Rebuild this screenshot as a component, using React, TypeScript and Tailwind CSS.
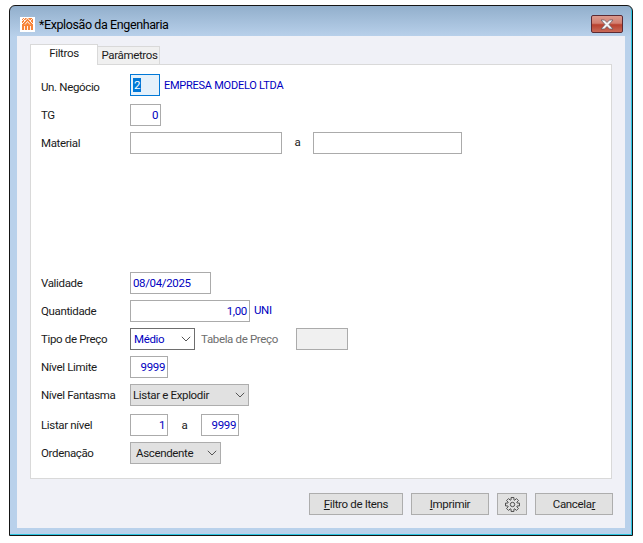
import React from "react";

const FONT = "font-['Roboto','Noto_Sans',sans-serif]";

type RowProps = {
  label: string;
  className?: string;
  labelClass?: string;
  children: React.ReactNode;
};

function Row({ label, className = "", labelClass = "pt-[2px]", children }: RowProps) {
  return (
    <div className={`flex items-center h-[22px] ${className}`}>
      <span className={`w-[89px] text-[#1a1a1a] ${labelClass}`}>{label}</span>
      {children}
    </div>
  );
}

type BoxProps = {
  width: string;
  value?: string;
  align?: string;
};

function Box({ width, value, align = "justify-end" }: BoxProps) {
  return (
    <div
      className={`flex items-center h-[22px] px-[2px] pt-[2px] border border-[#ababab] bg-white text-[#0000c0] ${width} ${align}`}
    >
      {value}
    </div>
  );
}

type ComboProps = {
  width: string;
  value: string;
  padding: string;
  dark?: boolean;
};

function Combo({ width, value, padding, dark }: ComboProps) {
  return (
    <div
      className={`flex items-center justify-between h-[22px] pr-[3px] border ${width} ${padding} ${
        dark
          ? "border-[#6e6e6e] bg-white text-[#0000c0]"
          : "border-[#adadad] bg-[#e1e1e1] text-[#1a1a1a]"
      }`}
    >
      <span className="pt-[2px]">{value}</span>
      <svg width="10" height="6" viewBox="0 0 10 6" fill="none" stroke="#555" strokeWidth="1">
        <path d="M.8.8 5 5l4.2-4.2" />
      </svg>
    </div>
  );
}

type ButtonProps = {
  width: string;
  children: React.ReactNode;
};

function Button({ width, children }: ButtonProps) {
  return (
    <div
      className={`flex items-center justify-center h-[22px] pt-[1px] border border-[#adadad] bg-[#e1e1e1] text-[#1a1a1a] ${width}`}
    >
      {children}
    </div>
  );
}

function AppIcon() {
  return (
    <div className="flex items-center justify-center w-[15px] h-[15px] bg-white">
      <svg width="11" height="12" viewBox="0 0 11 12">
        <rect width="11" height="12" fill="#f7843a" />
        <path
          d="M0 3 3 0M0 0l3 3 2.500-3M5.500 0 8 3l3-3M8 3l3 3M3 3 0 6M5.500 3.500 3 6.500M5.500 3.500 8 6.500M2.500 8v4M5.500 8v4M8.500 8v4"
          fill="none"
          stroke="#fff"
          strokeWidth="0.9"
        />
      </svg>
    </div>
  );
}

function CloseButton() {
  return (
    <div className="flex items-center justify-center w-[32px] h-[18px] rounded-[2px] border border-[#5b2a33] bg-[linear-gradient(#dc9a8e_0%,#d27f70_45%,#b8412f_55%,#c96a58_100%)]">
      <svg width="14" height="11" viewBox="0 0 14 11">
        <path
          d="M1 1h3.500L7 3.500 9.500 1H13L9 5.500l4 4.500H9.500L7 7.500 4.500 10H1l4-4.500z"
          fill="#f4f4f6"
          stroke="#5a5560"
          strokeWidth="0.7"
        />
      </svg>
    </div>
  );
}

// eight-tooth cog outline
const gearPath = Array.from({ length: 8 }, (_, i) => {
  const a = (i * Math.PI) / 4;
  const pts = [
    [a - 0.3, 7.8],
    [a - 0.2, 11.4],
    [a + 0.2, 11.4],
    [a + 0.3, 7.8],
  ];
  return pts
    .map(([t, r]) => `${(12 + r * Math.cos(t)).toFixed(2)} ${(12 + r * Math.sin(t)).toFixed(2)}`)
    .join(" L");
}).join(" L");

function GearIcon() {
  return (
    <svg width="15" height="15" viewBox="0 0 24 24" fill="none" stroke="#3a3a3a" strokeWidth="1.400" strokeLinejoin="round">
      <path d={`M${gearPath} Z`} />
      <circle cx="12" cy="12" r="3.500" />
    </svg>
  );
}

export default function App() {
  return (
    <div className={`w-[643px] h-[543px] bg-white pt-[5px] pl-[9px] text-[11.5px] tracking-[-0.35px] leading-none ${FONT}`}>
      <div className="flex flex-col w-[624px] h-[531px] rounded-t-[6px] border border-[#151515] shadow-[inset_-1px_-1px_0_#2bc4e0] bg-[linear-gradient(#92afcc_0px,#b9d1eb_31px,#b9d1eb_100%)]">
        {/* Title bar */}
        <div className="flex items-center h-[30px] shrink-0 pt-[6px] pl-[10px] pr-[9px]">
          <AppIcon />
          <span className="ml-[4px] pt-[2px] text-[12.5px] tracking-[-0.4px] text-black">*Explosão da Engenharia</span>
          <div className="ml-auto">
            <CloseButton />
          </div>
        </div>

        {/* Client area */}
        <div className="flex flex-col h-[492px] mx-[7px] bg-[#f0f1f7] px-[13px] pt-[8px]">
          {/* Tabs */}
          <div className="flex items-end h-[20px]">
            <div className="flex items-center justify-center w-[68px] h-[21px] pb-[2px] -mb-px z-10 bg-white border border-b-0 border-[#d9d9d9] text-[#1a1a1a]">
              Filtros
            </div>
            <div className="flex items-center justify-center w-[62px] h-[18px] pl-[2px] bg-[#f0f0f0] border border-l-0 border-b-0 border-[#d9d9d9] text-[#1a1a1a]">
              Parâmetros
            </div>
          </div>

          {/* Tab page */}
          <div className="h-[415px] w-[582px] border border-[#d9d9d9] bg-white pl-[10px] pt-[9px]">
            <Row label="Un. Negócio" labelClass="pt-[5px]">
              <div className="flex items-center w-[30px] h-[22px] px-[2px] border border-[#0078d7] bg-[#e5f1fb]">
                <span className="bg-[#0078d7] text-white px-px leading-[14px]">2</span>
              </div>
              <span className="ml-[4px] text-[11px] tracking-[-0.25px] text-[#0000c0]">EMPRESA MODELO LTDA</span>
            </Row>
            <Row label="TG" className="mt-[8px]">
              <Box width="w-[31px]" value="0" />
            </Row>
            <Row label="Material" className="mt-[6px]">
              <Box width="w-[152px]" />
              <span className="w-[31px] text-center text-[#1a1a1a]">a</span>
              <Box width="w-[149px]" />
            </Row>

            <Row label="Validade" className="mt-[118px]">
              <Box width="w-[81px]" value="08/04/2025" align="justify-start" />
            </Row>
            <Row label="Quantidade" className="mt-[6px]">
              <Box width="w-[120px]" value="1,00" />
              <span className="ml-[4px] text-[#0000c0]">UNI</span>
            </Row>
            <Row label="Tipo de Preço" className="mt-[6px]">
              <Combo width="w-[65px]" padding="pl-[3px]" value="Médio" dark />
              <span className="w-[101px] pl-[6px] pt-[2px] text-[#6d6d6d]">Tabela de Preço</span>
              <div className="w-[52px] h-[22px] border border-[#ababab] bg-[#f0f0f0]" />
            </Row>
            <Row label="Nível Limite" className="mt-[6px]">
              <Box width="w-[38px]" value="9999" />
            </Row>
            <Row label="Nível Fantasma" className="mt-[6px]">
              <Combo width="w-[119px]" padding="pl-[2px]" value="Listar e Explodir" />
            </Row>
            <Row label="Listar nível" className="mt-[8px]">
              <Box width="w-[38px]" value="1" />
              <span className="w-[33px] pt-[2px] text-center text-[#1a1a1a]">a</span>
              <Box width="w-[38px]" value="9999" />
            </Row>
            <Row label="Ordenação" className="mt-[6px]">
              <Combo width="w-[91px]" padding="pl-[5px]" value="Ascendente" />
            </Row>
          </div>

          {/* Footer buttons */}
          <div className="flex justify-end gap-[8px] w-[583px] mt-[14px]">
            <Button width="w-[94px]">
              <span>
                <span className="underline">F</span>iltro de Itens
              </span>
            </Button>
            <Button width="w-[78px]">
              <span>
                <span className="underline">I</span>mprimir
              </span>
            </Button>
            <Button width="w-[30px]">
              <GearIcon />
            </Button>
            <Button width="w-[78px]">
              <span>
                Cancela<span className="underline">r</span>
              </span>
            </Button>
          </div>
        </div>
      </div>
    </div>
  );
}
